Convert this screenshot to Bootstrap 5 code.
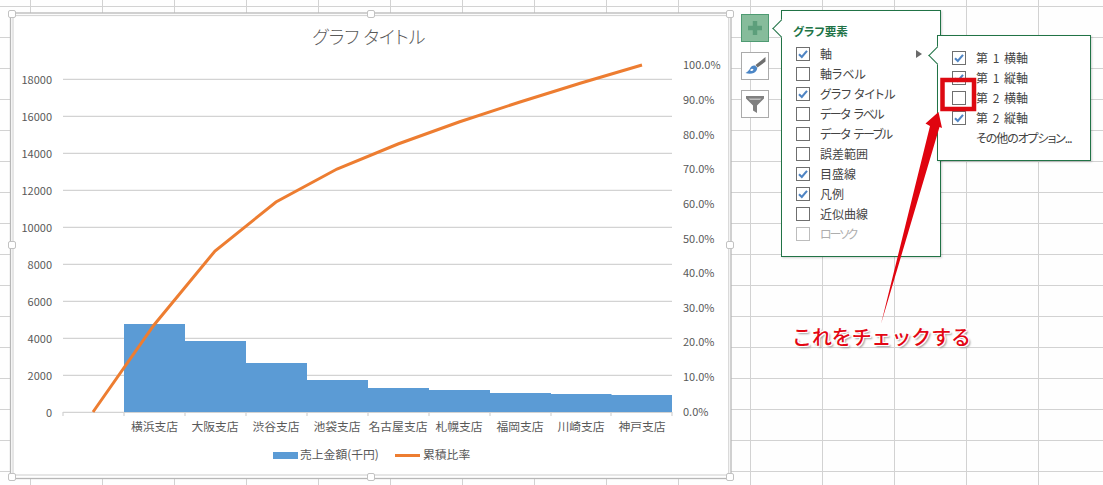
<!DOCTYPE html>
<html lang="ja">
<head>
<meta charset="utf-8">
<title>グラフ要素</title>
<link href="https://cdn.jsdelivr.net/npm/bootstrap@5.3.0/dist/css/bootstrap.min.css" rel="stylesheet">
<style>
html,body{height:485px;overflow:hidden}
body{font-family:"Noto Sans CJK JP","Liberation Sans",sans-serif;color:#444;background-color:#fefefe;
background-image:linear-gradient(to right,#d2d2d2 1.4px,transparent 1.4px),linear-gradient(to bottom,#d2d2d2 1.4px,transparent 1.4px);
background-size:72px 31px;background-position:30px 6px}
.sheet{width:1103px;height:485px;padding:9.5px 0 0 11px;position:relative}
.chart-box{width:722px;height:466px;margin-top:3.5px;flex:none;display:block;overflow:visible}
.chart-box text{font-family:"Noto Sans CJK JP","Liberation Sans",sans-serif;fill:#595959;font-size:11px}
.chart-box .ttl{font-size:18px;font-weight:300;font-feature-settings:"palt"}
.chart-box .cat{font-size:11.8px}
.side-tools{width:28px;margin:4.5px 0 0 8px;gap:10px;flex:none}
.tool-btn{width:28px;height:28px;border:1px solid #ababab;background:#fff;display:flex;align-items:center;justify-content:center}
.tool-btn.on{background:#86bc9b;border-color:#4e9a72}
.pop-panel{width:160px;height:247px;margin-left:12px;flex:none;background:#fff;border:1px solid #217346;position:relative;padding:10.5px 0 0 14px;box-shadow:1px 1px 2px rgba(0,0,0,.18)}
.pop-panel::before,.fly-panel::before{content:"";position:absolute;width:13px;height:13px;background:#fff;border-left:1px solid #217346;border-bottom:1px solid #217346;transform:rotate(45deg)}
.pop-panel::before{left:-7.5px;top:11.5px}
.fly-panel::before{left:-7.5px;top:12.5px}
.pop-title{height:20px;line-height:20px;margin-bottom:3px;margin-left:-3px;color:#217346;font-size:11.6px;font-weight:700;font-feature-settings:"palt"}
.pop-row{height:20px;display:flex;align-items:center;font-size:12px;line-height:20px;white-space:pre;font-feature-settings:"palt"}
.tight-a{letter-spacing:-1.4px;word-spacing:3px}
.tight-b{letter-spacing:-2px}
.form-check-input.xl-check{width:14px;height:14px;margin:0 10px 0 0;border:1px solid #6f6f6f;border-radius:0;background-color:#fff;flex:none;opacity:1;box-shadow:none}
.form-check-input.xl-check:checked{background-color:#fff;border-color:#6f6f6f;background-size:14px 14px;background-image:url("data:image/svg+xml,%3Csvg xmlns='http://www.w3.org/2000/svg' viewBox='0 0 14 14'%3E%3Cpath d='M3 7.2l2.8 2.8L11 3.8' fill='none' stroke='%235085c4' stroke-width='2.1'/%3E%3C/svg%3E")}
.form-check-input.xl-check:disabled{border-color:#bdbdbd}
.pop-row.off{color:#aeaeae}
.more-tri{width:0;height:0;border-left:6px solid #6a6a6a;border-top:4.5px solid transparent;border-bottom:4.5px solid transparent;margin-left:auto;margin-right:18px}
.fly-panel{position:absolute;left:155px;top:24.5px;width:154px;height:126px;background:#fff;border:1px solid #217346;padding:12px 0 0 14px;box-shadow:1px 1px 2px rgba(0,0,0,.18)}
.fly-panel .pop-row{word-spacing:2px}
.fly-panel .plain-txt{padding-left:24px;letter-spacing:-1.1px}
.note-layer{position:absolute;left:0;top:0;width:1103px;height:485px;pointer-events:none}
.note-txt{position:absolute;left:792px;top:322px;font-size:19.9px;line-height:30px;font-weight:500;color:#e30613;white-space:nowrap;text-shadow:1px 1px 0 #fff,-1px -1px 0 #fff,1px -1px 0 #fff,-1px 1px 0 #fff,2px 2px 2px #999}
</style>
</head>
<body class="m-0">
<div class="sheet d-flex align-items-start">
<svg class="chart-box" viewBox="11 13 722 466" xmlns="http://www.w3.org/2000/svg">
<rect x="10.500" y="13" width="720.500" height="465.500" fill="#fff" stroke="#b7b7b7" stroke-width="1.3"/>
<rect x="13" y="15.500" width="715.700" height="459.500" fill="#fff" stroke="#d6d6d6" stroke-width="1.2"/>
<g stroke="#d3d3d3" stroke-width="1.2">
<path d="M63 79.3H672M63 116.3H672M63 153.3H672M63 190.3H672M63 227.3H672M63 264.3H672M63 301.3H672M63 338.3H672M63 375.3H672M63 412.3H672"/>
<path d="M63 412V416M124 412V416M185 412V416M246 412V416M307 412V416M368 412V416M429 412V416M490 412V416M551 412V416M611 412V416M672 412V416"/>
</g>
<g fill="#5b9bd5">
<rect x="124" y="324" width="61" height="88"/><rect x="185" y="341" width="61" height="71"/><rect x="246" y="363" width="61" height="49"/><rect x="307" y="380" width="61" height="32"/><rect x="368" y="388" width="61" height="24"/><rect x="429" y="390" width="61" height="22"/><rect x="490" y="393" width="61" height="19"/><rect x="551" y="394" width="60.500" height="18"/><rect x="611" y="395" width="61" height="17"/>
</g>
<polyline points="93,412 154,325 215,251 276,202 337,169 398,144 459,122 520,102 581,83 642,65" fill="none" stroke="#ed7d31" stroke-width="3"/>
<text class="ttl" x="369" y="44" text-anchor="middle">グラフ タイトル</text>
<g text-anchor="end">
<text x="52" y="83.500">18000</text><text x="52" y="120.500">16000</text><text x="52" y="157.500">14000</text><text x="52" y="194.500">12000</text><text x="52" y="231.500">10000</text><text x="52" y="268.500">8000</text><text x="52" y="305.500">6000</text><text x="52" y="342.500">4000</text><text x="52" y="379.500">2000</text><text x="52" y="416.500">0</text>
</g>
<g>
<text x="683" y="69">100.0%</text><text x="683" y="104">90.0%</text><text x="683" y="138.500">80.0%</text><text x="683" y="173">70.0%</text><text x="683" y="208">60.0%</text><text x="683" y="242.500">50.0%</text><text x="683" y="277">40.0%</text><text x="683" y="312">30.0%</text><text x="683" y="346">20.0%</text><text x="683" y="381">10.0%</text><text x="683" y="416">0.0%</text>
</g>
<g text-anchor="middle">
<text class="cat" x="154.500" y="431">横浜支店</text><text class="cat" x="215" y="431">大阪支店</text><text class="cat" x="276" y="431">渋谷支店</text><text class="cat" x="337" y="431">池袋支店</text><text class="cat" x="398" y="431">名古屋支店</text><text class="cat" x="459" y="431">札幌支店</text><text class="cat" x="520" y="431">福岡支店</text><text class="cat" x="581" y="431">川崎支店</text><text class="cat" x="642" y="431">神戸支店</text>
</g>
<rect x="273" y="452" width="25" height="7" fill="#5b9bd5"/>
<text class="cat" x="300" y="459">売上金額(千円)</text>
<path d="M395 455.500H420" stroke="#ed7d31" stroke-width="3"/>
<text class="cat" x="423" y="459">累積比率</text>
<g fill="#fff" stroke="#c2c2c2">
<rect x="8.500" y="10.500" width="7" height="7" rx="1.500"/><rect x="367.500" y="10.500" width="7" height="7" rx="1.500"/><rect x="726.500" y="10.500" width="7" height="7" rx="1.500"/>
<rect x="8.500" y="241.500" width="7" height="7" rx="1.500"/><rect x="726.500" y="241.500" width="7" height="7" rx="1.500"/>
<rect x="8.500" y="473.500" width="7" height="7" rx="1.500"/><rect x="367.500" y="473.500" width="7" height="7" rx="1.500"/><rect x="726.500" y="473.500" width="7" height="7" rx="1.500"/>
</g>
</svg>

<div class="side-tools d-flex flex-column">
<div class="tool-btn on"><svg width="14" height="14" viewBox="0 0 14 14"><path d="M4.800 0h4.400v4.800H14v4.400H9.200V14H4.800V9.200H0V4.800h4.800z" fill="#5c9f7b"/></svg></div>
<div class="tool-btn"><svg width="22" height="22" viewBox="0 0 22 22"><path d="M21.500 2 L11.500 10 L13.500 12.500 L21.500 6.500z" fill="#6f6f6f"/><path d="M11 10.500c-2-.5-4 .5-5 3-.8 1.800-2 3-4.500 4.500 4 1.500 9 1 11-2.500.8-1.300.8-2.500.5-3z" fill="#4b86c6"/><path d="M6.500 14.500c1-1 2.500-.8 3 .3-.5 1-2 1.500-3 1.200z" fill="#fff"/></svg></div>
<div class="tool-btn"><svg width="18" height="18" viewBox="0 0 18 18"><path d="M0 1H18V3.500L11 10.500V18L7 15.500V10.500L0 3.500z" fill="#808080"/><path d="M2.500 3.500H15.500L14 5H4z" fill="#bdbdbd"/></svg></div>
</div>

<div class="pop-panel">
<div class="pop-title">グラフ要素</div>
<div class="pop-row"><input class="form-check-input xl-check" type="checkbox" checked aria-label="軸"><span>軸</span><span class="more-tri"></span></div>
<div class="pop-row"><input class="form-check-input xl-check" type="checkbox" aria-label="軸ラベル"><span>軸ラベル</span></div>
<div class="pop-row"><input class="form-check-input xl-check" type="checkbox" checked aria-label="グラフ タイトル"><span>グラフ タイトル</span></div>
<div class="pop-row"><input class="form-check-input xl-check" type="checkbox" aria-label="データ ラベル"><span class="tight-a">データ ラベル</span></div>
<div class="pop-row"><input class="form-check-input xl-check" type="checkbox" aria-label="データ テーブル"><span class="tight-a">データ テーブル</span></div>
<div class="pop-row"><input class="form-check-input xl-check" type="checkbox" aria-label="誤差範囲"><span>誤差範囲</span></div>
<div class="pop-row"><input class="form-check-input xl-check" type="checkbox" checked aria-label="目盛線"><span>目盛線</span></div>
<div class="pop-row"><input class="form-check-input xl-check" type="checkbox" checked aria-label="凡例"><span>凡例</span></div>
<div class="pop-row"><input class="form-check-input xl-check" type="checkbox" aria-label="近似曲線"><span>近似曲線</span></div>
<div class="pop-row off"><input class="form-check-input xl-check" type="checkbox" disabled aria-label="ローソク"><span class="tight-b">ローソク</span></div>
<div class="fly-panel">
<div class="pop-row"><input class="form-check-input xl-check" type="checkbox" checked aria-label="第 1 横軸"><span>第 1 横軸</span></div>
<div class="pop-row"><input class="form-check-input xl-check" type="checkbox" checked aria-label="第 1 縦軸"><span>第 1 縦軸</span></div>
<div class="pop-row"><input class="form-check-input xl-check" type="checkbox" aria-label="第 2 横軸"><span>第 2 横軸</span></div>
<div class="pop-row"><input class="form-check-input xl-check" type="checkbox" checked aria-label="第 2 縦軸"><span>第 2 縦軸</span></div>
<div class="pop-row plain-txt">その他のオプション...</div>
</div>
</div>

<svg class="note-layer" viewBox="0 0 1103 485" xmlns="http://www.w3.org/2000/svg">
<rect x="942.500" y="80" width="31.500" height="29" fill="none" stroke="#dd0a12" stroke-width="4.500"/>
<path d="M881 324 L930 126 L925.500 123.500 L938.500 112 L942 128 L939.500 127 Z" fill="#e0040f"/>
</svg>
<span class="note-txt">これをチェックする</span>
</div>
</body>
</html>
